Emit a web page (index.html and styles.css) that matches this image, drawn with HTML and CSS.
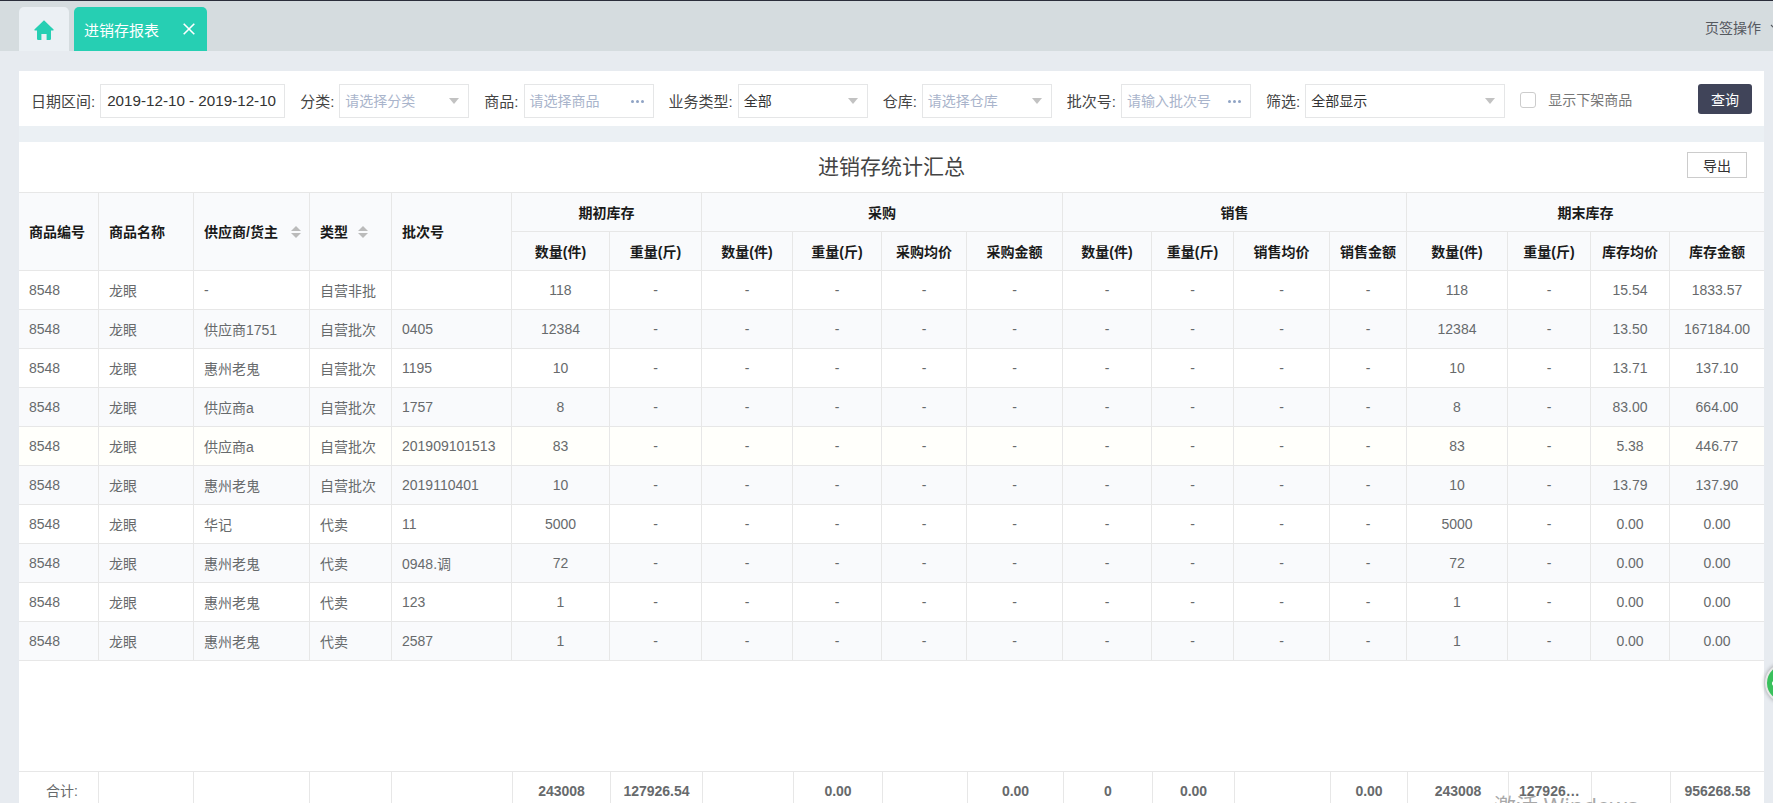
FILE: index.html
```html
<!DOCTYPE html>
<html lang="zh-CN">
<head>
<meta charset="utf-8">
<title>进销存报表</title>
<link rel="stylesheet" href="styles.css">
</head>
<body>
<div class="app">
  <header class="tabbar">
    <div class="tab tab-home">
      <svg class="home-icon" viewBox="0 0 20 20"><path d="M10 0.3 L19.6 9.6 Q20 10.6 19 10.6 L17 10.6 L17 18.8 Q17 20 15.8 20 L12.6 20 L12.6 14 L7.4 14 L7.4 20 L4.2 20 Q3 20 3 18.8 L3 10.6 L1 10.6 Q0 10.6 0.4 9.6 Z"/></svg>
    </div>
    <div class="tab tab-active">
      <span>进销存报表</span>
      <svg class="close-icon" viewBox="0 0 12 12"><path d="M0.7 0.7 L11.3 11.3 M11.3 0.7 L0.7 11.3"/></svg>
    </div>
    <div class="tab-actions">
      <span>页签操作</span>
      <svg class="chev" viewBox="0 0 10 6"><path d="M1 1 L5 5 L9 1"/></svg>
    </div>
  </header>

  <main class="main">
    <section class="filters">
      <div class="field"><label>日期区间:</label><div class="ctl w185 val date">2019-12-10 - 2019-12-10</div></div>
      <div class="field"><label>分类:</label><div class="ctl w130 ph">请选择分类<i class="arrow"></i></div></div>
      <div class="field"><label>商品:</label><div class="ctl w130 ph">请选择商品<svg class="dots" viewBox="0 0 13 3"><circle cx="1.5" cy="1.5" r="1.5"/><circle cx="6.5" cy="1.5" r="1.5"/><circle cx="11.5" cy="1.5" r="1.5"/></svg></div></div>
      <div class="field"><label>业务类型:</label><div class="ctl w130 val">全部<i class="arrow"></i></div></div>
      <div class="field"><label>仓库:</label><div class="ctl w130 ph">请选择仓库<i class="arrow"></i></div></div>
      <div class="field"><label>批次号:</label><div class="ctl w130 ph">请输入批次号<svg class="dots" viewBox="0 0 13 3"><circle cx="1.5" cy="1.5" r="1.5"/><circle cx="6.5" cy="1.5" r="1.5"/><circle cx="11.5" cy="1.5" r="1.5"/></svg></div></div>
      <div class="field"><label>筛选:</label><div class="ctl w200 val">全部显示<i class="arrow"></i></div></div>
      <div class="check"><span class="box"></span><span class="check-text">显示下架商品</span></div>
      <button class="query">查询</button>
    </section>

    <div class="divider"></div>

    <section class="report">
      <div class="report-head">
        <h1>进销存统计汇总</h1>
        <button class="export">导出</button>
      </div>
      <div class="grid-body">
        <table class="grid">
          <colgroup><col class="c1"><col class="c2"><col class="c3"><col class="c4"><col class="c5"><col class="c6"><col class="c7"><col class="c8"><col class="c9"><col class="c10"><col class="c11"><col class="c12"><col class="c13"><col class="c14"><col class="c15"><col class="c16"><col class="c17"><col class="c18"><col class="c19"></colgroup>
          <thead>
            <tr>
              <th rowspan="2" class="l">商品编号</th>
              <th rowspan="2" class="l">商品名称</th>
              <th rowspan="2" class="l th-sort">供应商/货主<i class="sort sort-wide"></i></th>
              <th rowspan="2" class="l th-sort">类型<i class="sort"></i></th>
              <th rowspan="2" class="l">批次号</th>
              <th colspan="2">期初库存</th>
              <th colspan="4">采购</th>
              <th colspan="4">销售</th>
              <th colspan="4">期末库存</th>
            </tr>
            <tr>
              <th>数量(件)</th><th>重量(斤)</th>
              <th>数量(件)</th><th>重量(斤)</th><th>采购均价</th><th>采购金额</th>
              <th>数量(件)</th><th>重量(斤)</th><th>销售均价</th><th>销售金额</th>
              <th>数量(件)</th><th>重量(斤)</th><th>库存均价</th><th>库存金额</th>
            </tr>
          </thead>
          <tbody>
            <tr><td class="l">8548</td><td class="l">龙眼</td><td class="l">-</td><td class="l">自营非批</td><td class="l"></td><td>118</td><td>-</td><td>-</td><td>-</td><td>-</td><td>-</td><td>-</td><td>-</td><td>-</td><td>-</td><td>118</td><td>-</td><td>15.54</td><td>1833.57</td></tr>
            <tr class="alt"><td class="l">8548</td><td class="l">龙眼</td><td class="l">供应商1751</td><td class="l">自营批次</td><td class="l">0405</td><td>12384</td><td>-</td><td>-</td><td>-</td><td>-</td><td>-</td><td>-</td><td>-</td><td>-</td><td>-</td><td>12384</td><td>-</td><td>13.50</td><td>167184.00</td></tr>
            <tr><td class="l">8548</td><td class="l">龙眼</td><td class="l">惠州老鬼</td><td class="l">自营批次</td><td class="l">1195</td><td>10</td><td>-</td><td>-</td><td>-</td><td>-</td><td>-</td><td>-</td><td>-</td><td>-</td><td>-</td><td>10</td><td>-</td><td>13.71</td><td>137.10</td></tr>
            <tr class="alt"><td class="l">8548</td><td class="l">龙眼</td><td class="l">供应商a</td><td class="l">自营批次</td><td class="l">1757</td><td>8</td><td>-</td><td>-</td><td>-</td><td>-</td><td>-</td><td>-</td><td>-</td><td>-</td><td>-</td><td>8</td><td>-</td><td>83.00</td><td>664.00</td></tr>
            <tr class="hover"><td class="l">8548</td><td class="l">龙眼</td><td class="l">供应商a</td><td class="l">自营批次</td><td class="l">201909101513</td><td>83</td><td>-</td><td>-</td><td>-</td><td>-</td><td>-</td><td>-</td><td>-</td><td>-</td><td>-</td><td>83</td><td>-</td><td>5.38</td><td>446.77</td></tr>
            <tr class="alt"><td class="l">8548</td><td class="l">龙眼</td><td class="l">惠州老鬼</td><td class="l">自营批次</td><td class="l">2019110401</td><td>10</td><td>-</td><td>-</td><td>-</td><td>-</td><td>-</td><td>-</td><td>-</td><td>-</td><td>-</td><td>10</td><td>-</td><td>13.79</td><td>137.90</td></tr>
            <tr><td class="l">8548</td><td class="l">龙眼</td><td class="l">华记</td><td class="l">代卖</td><td class="l">11</td><td>5000</td><td>-</td><td>-</td><td>-</td><td>-</td><td>-</td><td>-</td><td>-</td><td>-</td><td>-</td><td>5000</td><td>-</td><td>0.00</td><td>0.00</td></tr>
            <tr class="alt"><td class="l">8548</td><td class="l">龙眼</td><td class="l">惠州老鬼</td><td class="l">代卖</td><td class="l">0948.调</td><td>72</td><td>-</td><td>-</td><td>-</td><td>-</td><td>-</td><td>-</td><td>-</td><td>-</td><td>-</td><td>72</td><td>-</td><td>0.00</td><td>0.00</td></tr>
            <tr><td class="l">8548</td><td class="l">龙眼</td><td class="l">惠州老鬼</td><td class="l">代卖</td><td class="l">123</td><td>1</td><td>-</td><td>-</td><td>-</td><td>-</td><td>-</td><td>-</td><td>-</td><td>-</td><td>-</td><td>1</td><td>-</td><td>0.00</td><td>0.00</td></tr>
            <tr class="alt"><td class="l">8548</td><td class="l">龙眼</td><td class="l">惠州老鬼</td><td class="l">代卖</td><td class="l">2587</td><td>1</td><td>-</td><td>-</td><td>-</td><td>-</td><td>-</td><td>-</td><td>-</td><td>-</td><td>-</td><td>1</td><td>-</td><td>0.00</td><td>0.00</td></tr>
          </tbody>
        </table>
      </div>
      <table class="grid foot">
        <colgroup><col class="c1"><col class="c2"><col class="c3"><col class="c4"><col class="c5"><col class="c6"><col class="c7"><col class="c8"><col class="c9"><col class="c10"><col class="c11"><col class="c12"><col class="c13"><col class="c14"><col class="c15"><col class="c16"><col class="c17"><col class="c18"><col class="c19"></colgroup>
        <tbody>
          <tr><td class="sum-label">合计:</td><td></td><td></td><td></td><td></td><td>243008</td><td>127926.54</td><td></td><td>0.00</td><td></td><td>0.00</td><td>0</td><td>0.00</td><td></td><td>0.00</td><td>243008</td><td>127926.54</td><td></td><td>956268.58</td></tr>
        </tbody>
      </table>
    </section>
  </main>

  <div class="float-ball"><span class="ball-dot"></span></div>
  <div class="watermark">激活 Windows</div>
</div>
</body>
</html>
```

FILE: styles.css
```css
* { box-sizing: border-box; }
html, body { margin: 0; padding: 0; height: 100%; overflow: hidden; }
body {
  font-family: "Liberation Sans", "Noto Sans CJK SC", sans-serif;
  font-size: 14px;
  color: #676a6c;
}
.app {
  position: relative;
  width: 1773px;
  height: 803px;
  overflow: hidden;
  background: #e7ebf0;
}

/* tab bar */
.tabbar {
  display: flex;
  align-items: flex-start;
  gap: 5px;
  height: 51px;
  padding: 6px 0 0 19px;
  background: #d5dcdf;
  border-top: 1px solid #2b2e3b;
}
.tab {
  display: flex;
  align-items: center;
  height: 44px;
  border-radius: 5px 5px 0 0;
}
.tab-home {
  width: 50px;
  justify-content: center;
  background: #ebf0f4;
}
.home-icon { width: 20px; height: 20px; fill: #26cfb3; margin-top: 1px; }
.tab-active {
  width: 133px;
  padding: 0 12px 0 10px;
  justify-content: space-between;
  background: #26cfb3;
  color: #fff;
  font-size: 15px;
}
.close-icon { width: 12px; height: 12px; stroke: #fff; stroke-width: 1.6; fill: none; }
.tab-actions {
  display: flex;
  align-items: center;
  gap: 9px;
  margin-left: auto;
  width: 68px;
  height: 40px;
  margin-top: 0;
  overflow: hidden;
  color: #55595f;
  white-space: nowrap;
  flex: none;
}
.chev { width: 10px; height: 6px; stroke: #55595f; stroke-width: 1.2; fill: none; flex: none; }

/* main */
.main { padding: 20px 9px 0 19px; }

.filters {
  display: flex;
  align-items: flex-start;
  gap: 15px;
  height: 55px;
  padding: 13px 12px 0 12px;
  background: #fff;
}
.field { display: flex; align-items: center; flex: none; }
.field label { margin: 0 5px 2px 0; font-size: 15px; color: #444; white-space: nowrap; }
.ctl {
  position: relative;
  display: flex;
  align-items: center;
  height: 34px;
  padding: 0 0 2px 5px;
  border: 1px solid #e5e6e7;
  background: #fff;
  white-space: nowrap;
}
.w185 { width: 185px; }
.w130 { width: 130px; }
.w200 { width: 200px; }
.ph { color: #a9b4cb; }
.val { color: #333; }
.date { font-size: 15.2px; padding-left: 6px; }
.arrow {
  margin: 2px 9px 0 auto;
  width: 0;
  height: 0;
  border-style: solid;
  border-width: 6px 5.5px 0 5.5px;
  border-color: #c2c2c2 transparent transparent transparent;
}
.dots { margin: 2px 9px 0 auto; width: 13px; height: 3px; fill: #8fa3c4; }
.check { display: flex; align-items: center; gap: 12px; margin-top: 8px; flex: none; }
.box {
  width: 16px;
  height: 16px;
  border: 1px solid #ccc;
  border-radius: 3px;
  background: #fff;
}
.check-text { color: #777; line-height: 16px; white-space: nowrap; }
.query {
  margin-left: auto;
  width: 54px;
  height: 30px;
  padding: 0;
  border: 0;
  border-radius: 3px;
  background: #404459;
  color: #fff;
  font: inherit;
}
.divider { height: 16px; background: #ebf0f4; }

/* report */
.report { background: #fff; }
.report-head {
  display: grid;
  grid-template-columns: 1fr auto 1fr;
  height: 50px;
}
.report-head h1 {
  grid-column: 2;
  margin: 0;
  font-size: 21px;
  font-weight: 400;
  line-height: 50px;
  color: #444;
}
.export {
  grid-column: 3;
  justify-self: end;
  width: 60px;
  height: 26px;
  margin: 10px 17px 0 0;
  padding: 0;
  border: 1px solid #ccc;
  background: #fff;
  color: #333;
  font: inherit;
}
.grid-body { height: 579px; }

.grid {
  width: 1745px;
  table-layout: fixed;
  border-collapse: separate;
  border-spacing: 0;
  border-top: 1px solid #e7e7e7;
}
.c1 { width: 80px; }
.c2 { width: 95px; }
.c3 { width: 116px; }
.c4 { width: 82px; }
.c5 { width: 120px; }
.c6 { width: 98px; }
.c7 { width: 92px; }
.c8 { width: 91px; }
.c9 { width: 89px; }
.c10 { width: 85px; }
.c11 { width: 96px; }
.c12 { width: 89px; }
.c13 { width: 82px; }
.c14 { width: 96px; }
.c15 { width: 77px; }
.c16 { width: 101px; }
.c17 { width: 83px; }
.c18 { width: 79px; }
.c19 { width: 94px; }
.foot .c5 { width: 121px; }
.foot .c19 { width: 93px; }

.grid th, .grid td {
  height: 39px;
  padding: 0 10px 1px;
  border-right: 1px solid #e7e7e7;
  border-bottom: 1px solid #e7e7e7;
  text-align: center;
  vertical-align: middle;
  overflow: hidden;
  white-space: nowrap;
  text-overflow: ellipsis;
}
.grid th:last-child, .grid td:last-child { border-right: 0; }
.grid th {
  background: #f9fafc;
  color: #1a1a1a;
  font-weight: 700;
}
.grid .l { text-align: left; }
.grid th[rowspan].l { height: 78px; }
.grid th.th-sort { padding-right: 0; text-overflow: clip; }
.alt td { background: #f9fafc; }
.hover td { background: #fffffb; }

.sort {
  display: inline-block;
  position: relative;
  width: 10px;
  height: 12px;
  margin-left: 10px;
  vertical-align: -1px;
}
.sort-wide { margin-left: 13px; }
.sort::before, .sort::after {
  content: "";
  position: absolute;
  left: 0;
  border-style: solid;
  border-color: transparent;
}
.sort::before { top: 0; border-width: 0 5px 5px 5px; border-bottom-color: #bbb; }
.sort::after { bottom: 0; border-width: 5px 5px 0 5px; border-top-color: #bbb; }

.grid.foot td { height: 37px; padding-bottom: 0; font-weight: 700; color: #676a6c; border-bottom: 0; }
.grid.foot td.sum-label { padding: 0 0 2px 7px; font-weight: 400; }

/* overlays */
.float-ball {
  position: absolute;
  left: 1765px;
  top: 663px;
  display: flex;
  align-items: center;
  width: 40px;
  height: 40px;
  padding-left: 5px;
  border: 2px solid #e8e8e8;
  border-radius: 50%;
  background: #39c05c;
  box-shadow: 0 0 4px rgba(0, 0, 0, 0.35);
}
.ball-dot { width: 5px; height: 5px; border-radius: 50%; background: #fff; }
.watermark {
  position: absolute;
  left: 1494px;
  top: 790px;
  font-family: "Noto Sans", "Noto Sans CJK SC", sans-serif;
  font-size: 22px;
  line-height: 30px;
  color: rgba(140, 140, 140, 0.75);
  white-space: nowrap;
}
```
